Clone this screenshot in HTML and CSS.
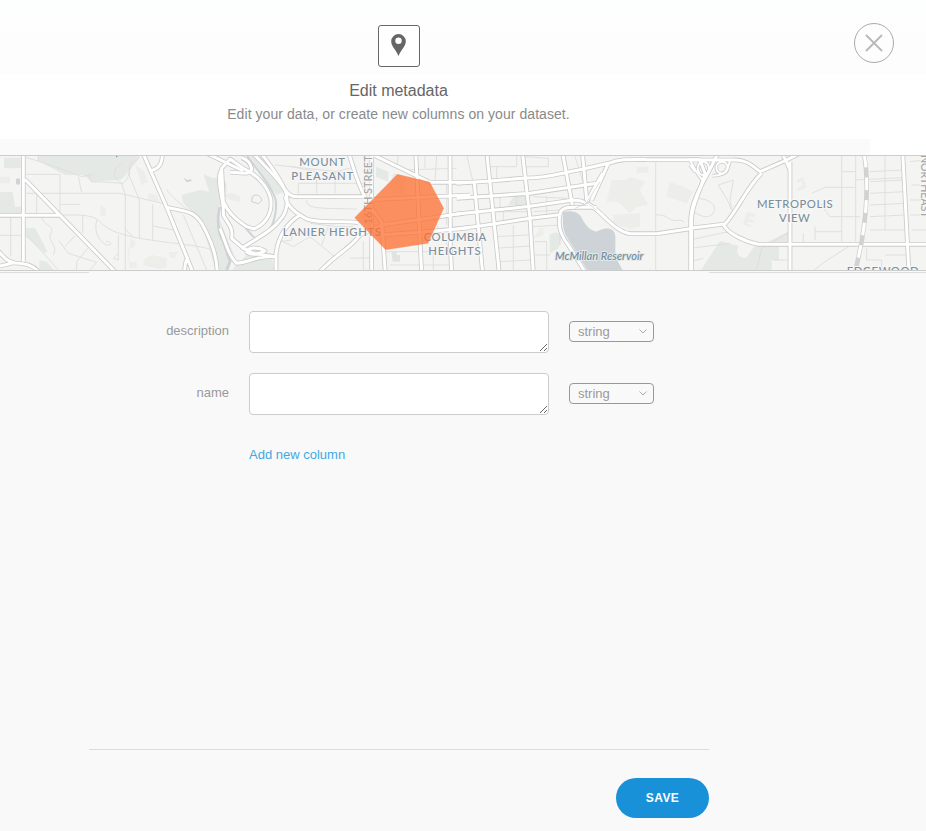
FILE: index.html
```html
<!DOCTYPE html>
<html lang="en">
<head>
<meta charset="utf-8">
<title>Edit metadata</title>
<link rel="stylesheet" href="styles.css">
</head>
<body>
<div class="dialog">
  <header class="header">
    <div class="heading">
      <div class="badge">
        <svg width="15" height="22" viewBox="0 0 15 22"><path fill="#666" fill-rule="evenodd" d="M7.500 0A7.300 7.300 0 0 0 .2 7.300C.2 12.400 4.500 15 7.500 22 10.500 15 14.800 12.400 14.800 7.300A7.300 7.300 0 0 0 7.500 0ZM7.500 3.500A3.200 3.200 0 1 1 7.500 9.900A3.200 3.200 0 0 1 7.500 3.500Z"/></svg>
      </div>
      <h1 class="title">Edit metadata</h1>
      <p class="subtitle">Edit your data, or create new columns on your dataset.</p>
    </div>
    <button class="close" aria-label="Close">
      <svg width="18" height="18" viewBox="0 0 18 18"><path d="M1 1 17 17M17 1 1 17" stroke="#b8b8b8" stroke-width="1.8"/></svg>
    </button>
  </header>

  <svg class="map" viewBox="0 33 2778 342" preserveAspectRatio="none">
    <defs>
      <g id="major">
        <path d="M70 20V350M-10 211H180M75 103 350 385M-10 313C10 334 20 350 45 354C80 356 100 360 120 385M-10 366 45 352"/>
        <path d="M427 20 500 187 580 385M487 20C488 50 482 70 453 77M500 187C555 200 580 195 605 235C635 290 650 330 652 385M565 335C553 350 556 365 553 385M620 25 730 78"/>
        <g transform="translate(690)">
          <path d="M425 20V385M65 20C110 70 145 100 165 135C180 155 190 155 210 155H400M90 20C120 60 145 90 165 135C178 165 170 205 150 225C120 265 70 285 35 310M165 155C175 190 200 205 230 222C280 238 340 225 385 233M210 210C170 235 145 275 138 325V385M355 20C380 100 395 160 455 230L466 385M265 385C310 335 350 315 375 287L395 265M395 268 455 240 700 205M430 30 600 112H720M400 165 720 150M450 270 590 260 720 248M557 20 575 385M660 20 661 300 665 385"/>
          <path d="M-25 70 0 42 40 70C75 85 112 120 122 160C130 210 100 240 72 252L50 245C20 225 -5 205 -20 170ZM-25 75C-45 100 -15 175 -20 210C-5 240 10 245 5 280L40 310L70 325L135 335M-30 250C-10 300 -5 330 20 355C65 350 90 330 135 335M48 320C60 304 90 308 105 318C80 330 60 330 48 320M0 82C20 80 65 95 65 70C60 50 50 43 35 38"/>
        </g>
        <g transform="translate(1380)">
          <path d="M-10 115 90 108 195 99C260 100 300 85 370 72L445 55C480 42 500 43 560 44H720M-10 160 210 145C280 135 320 128 410 115M-10 207 210 184 340 165C380 165 395 185 410 195M-10 252 60 243 210 220 300 209M80 20 100 210 118 385M43 115 68 385M187 20 210 220 220 385M307 20 337 180M367 20 380 165M445 55 395 165M410 195C440 220 470 260 510 266H590L700 250M300 210C292 245 305 275 325 300L378 385M300 210C300 185 330 187 360 187H410"/>
          <path d="M375 180 428 85M720 45 735 85C725 130 695 180 695 220V385"/>
        </g>
        <g transform="translate(2070)">
          <path d="M85 20C55 95 5 150 2 225V385M0 45H130C170 42 190 65 210 80L290 45 330 25M215 85C175 120 140 200 105 237L0 250M100 237C110 265 165 290 205 298H720M300 50V385M275 20 300 75M638 20 657 385"/>
        </g>
      </g>
      <g id="loops"><ellipse cx="2110" cy="70" rx="17" ry="20"/><ellipse cx="2166" cy="68" rx="17" ry="18"/><path d="M2070 45C2082 70 2092 88 2108 106M2190 45C2184 80 2170 92 2138 92M2070 60 2085 80"/></g>
    </defs>
    <rect y="30" width="2778" height="345" fill="#f4f4f3"/>
    <g fill="#e5e9e6">
      <path d="M115 30H415C400 60 380 95 360 105L275 110 250 90H195L115 48ZM12 38H62V70H12ZM0 142 38 140 45 185H65V205H0ZM78 250 105 248 142 318 135 325 78 275ZM118 345 140 350 170 385H118ZM545 150 600 135 628 140 610 88 640 100C670 90 690 115 675 150L650 200 700 325 685 385H650L605 235 550 175ZM745 30 790 30 850 140 830 150ZM700 370 740 330 815 335 825 385H690ZM2100 380 2160 288 2215 303C2205 325 2220 342 2240 337L2262 305 2285 300 2368 258 2370 300 2337 303V345H2315V380ZM1540 155 1575 145 1580 180H1525ZM1648 270C1670 250 1695 270 1675 310L1650 325ZM1128 65 1165 80V110L1128 95ZM1180 85 1220 100 1210 150 1170 130ZM690 145 720 155V170L695 165Z"/>
      <path fill="#edeee9" d="M390 280 408 290 400 310H385V350H410V370H387ZM435 340 455 330 500 340V365L480 372 430 360ZM300 180 318 190 315 215 302 210ZM505 322 535 320 525 338H510ZM405 60 430 75 445 110 425 120ZM445 145 470 150 480 170 445 165ZM0 95 30 95V115H0ZM1835 105H1875L1890 95 1935 110 1920 135 1945 180 1910 185 1890 205 1855 170H1820ZM1910 65H1945V82L1910 85ZM1840 210 1920 204V245L1890 252 1840 235ZM2008 110 2050 125 2080 140 2060 175 2000 155ZM1620 250 1630 248V270L1600 280ZM2240 200 2268 208 2264 218 2248 214 2246 222 2262 226 2260 234 2242 230 2240 236 2256 240 2252 246 2228 240ZM2390 105 2410 96 2420 128 2394 138 2392 130 2408 122 2404 108 2392 113ZM665 148 700 145 720 155V170L690 165Z"/>
    </g>
    <g fill="#cdd3d6">
      <path d="M1688 202C1710 195 1735 199 1745 218C1755 240 1770 256 1790 260C1805 249 1845 240 1846 275L1846 335 1870 380H1765L1700 275C1685 250 1690 225 1688 202Z"/>
      <rect x="48" y="100" width="12" height="19" rx="5"/>
      <path d="M550 98 562 105 574 103V109L560 111Z"/>
      <path d="M658 190C650 225 655 265 670 290L690 350 680 375" fill="none" stroke="#cdd3d6" stroke-width="8"/>
      <path d="M740 30C770 75 815 120 827 165C832 200 820 240 805 260 785 280 770 290 755 270L725 235 690 210 680 185 655 190" fill="none" stroke="#cdd3d6" stroke-width="6"/>
    </g>
    <g class="streets">
      <path d="M78 38C125 50 165 65 245 95L280 87M78 88H180V215M78 145H360L500 178M235 95 245 142M110 145V210M180 178H240M32 211V335M-10 271H65M248 211V265M180 211C280 205 290 220 310 240 365 290 550 290 630 312M290 225C280 265 300 290 320 300C345 302 325 285 318 290M125 215C130 245 170 240 150 270C145 290 175 300 160 330M80 270 135 330 175 375M177 287 205 325 290 352 270 375M225 272 195 305M263 310 230 350V375M355 270V345L340 340 355 325M365 55C330 75 340 110 370 115C395 95 385 60 390 55L420 38M265 90 275 110 330 112 365 115 376 150V385M385 85 418 165V280M458 178V285M458 243 522 255M500 135C530 170 575 205 605 230M550 210 620 375M375 250 400 278M115 30V48M415 30C415 60 380 60 390 90"/>
      <path d="M895 145V115H1090M950 145V80L875 65M1005 145V80L1070 65M825 60 1060 85M920 165C920 190 940 190 1070 192M930 235 1010 245 1060 245M840 285 880 305 930 275 1010 340M875 260V285L840 290M985 245 965 300M1050 340 1120 338V375M1090 290V375M1195 30 1190 65M1205 75 1370 70M1275 30V70M1310 30 1305 110M1290 110 1290 155M1340 105V240M1155 320H1220L1300 320M1170 360H1350M1300 220 1350 315M1300 320V375"/>
      <path class="fill" d="M757 155C770 143 785 155 785 168L775 176 755 170Z"/>
      <path d="M1400 30 1420 115M1460 65H1550V30M1490 65V110M1575 35 1645 40V65H1575M1725 35 1750 115M1500 155V195M1550 155V190M1475 200H1590M1510 200V240M1600 155 1700 160M1600 200 1680 195M1640 155V205M1485 275 1585 270M1485 310 1590 303M1490 350 1595 345M1540 240V385M1600 245 1680 240V300M1605 290H1640V385M1605 330H1650M1967 50V385M1967 210C2010 205 2000 235 2040 225L2052 230"/>
      <path d="M2085 160C2140 160 2155 190 2135 210C2110 225 2100 205 2070 200M2195 195 2182 165 2155 120 2200 105 2190 165ZM2070 285 2185 260M2070 310 2190 295M2070 350 2110 340M2270 375 2285 310 2370 260M2320 345H2370M2435 145 2475 127H2565M2460 175 2490 215H2580M2525 30V290M2567 30V290M2525 80H2567M2445 245V285M2445 260H2525M2410 265V300M2565 105 2710 98M2610 80 2710 75M2610 110 2710 105M2610 145 2715 140M2610 180 2715 175M2610 215 2715 210M2610 255 2720 255M2655 30V255M2730 50 2778 45M2735 120H2778M2730 165H2778M2730 210H2778M2735 255H2778M2430 385 2475 350 2545 305M2600 310V345H2645V375M2655 330H2725"/>
    </g>
    <use href="#major" class="road casing"/><use href="#loops" class="road casing slim"/>
    <use href="#major" class="road"/><use href="#loops" class="road slim"/>
    <path d="M1755 180 1800 110M1750 165 1790 195M1725 190 1770 170" fill="none" stroke="#ccc" stroke-width="2"/>
    <g fill="none"><path d="M2593 30C2606 110 2600 200 2585 290L2565 385" stroke="#d2d2d2" stroke-width="14"/><path d="M2593 30C2606 110 2600 200 2585 290L2565 385" stroke="#fff" stroke-width="9" stroke-dasharray="38 30"/></g>
    <g fill="#dfe3e1"><path d="M348 30H354L350 38Z" fill="#527c62"/><path d="M1174 320H1190V330H1200V350H1178Z"/></g>

    <g class="places">
      <text x="898" y="63" textLength="137">MOUNT</text>
      <text x="874" y="105" textLength="186">PLEASANT</text>
      <text x="848" y="272" textLength="295">LANIER HEIGHTS</text>
      <text x="1271" y="288" textLength="188">COLUMBIA</text>
      <text x="1285" y="330" textLength="157">HEIGHTS</text>
      <text x="2271" y="189" textLength="227">METROPOLIS</text>
      <text x="2337" y="230" textLength="92">VIEW</text>
      <text x="2540" y="389" textLength="216">EDGEWOOD</text>
      <text class="water" x="1665" y="345" textLength="265" lengthAdjust="spacingAndGlyphs">McMillan Reservoir</text>
      <text class="street" transform="translate(1115 238) rotate(-90)" textLength="207" lengthAdjust="spacingAndGlyphs">16TH STREET</text>
      <text class="street" transform="translate(2763 30) rotate(90)" textLength="188" lengthAdjust="spacingAndGlyphs">NORTHEAST</text>
    </g>
    <path d="M1192 88 1289 111 1331 190 1284 295 1157 314 1064 218Z" fill="#ff6d2d" fill-opacity=".75" stroke="#ff7a3d" stroke-opacity=".4" stroke-width="2"/>
  </svg>

  <main class="form">
    <div class="row">
      <label class="label" for="description">description</label>
      <textarea class="field" id="description"></textarea>
      <button class="type">string<svg width="8" height="5" viewBox="0 0 8 5"><path d="M.5.5 4 4 7.500.5" fill="none" stroke="#aaa"/></svg></button>
    </div>
    <div class="row">
      <label class="label" for="name">name</label>
      <textarea class="field" id="name"></textarea>
      <button class="type">string<svg width="8" height="5" viewBox="0 0 8 5"><path d="M.5.5 4 4 7.500.5" fill="none" stroke="#aaa"/></svg></button>
    </div>
    <a class="add">Add new column</a>
  </main>
  <footer class="footer"><button class="save">SAVE</button></footer>
</div>
</body>
</html>
```
FILE: styles.css
```css
* { box-sizing: border-box; }
body { margin: 0; background: #f9f9f9; font-family: "Liberation Sans", Arial, sans-serif; overflow: hidden; }
button { font-family: inherit; padding: 0; margin: 0; }
.dialog { width: 926px; height: 831px; display: flex; flex-direction: column; }
.header {
  height: 155px; flex: none; display: flex; justify-content: space-between; align-items: flex-start; padding-right: 32px;
  background: linear-gradient(#fafafa, #fafafa) 0 139px / 870px 16px no-repeat, linear-gradient(#fdfefe, #fdfdfd) 0 0 / 100% 75px no-repeat, #fff;
}
.heading { width: 797px; padding-top: 25px; display: flex; flex-direction: column; align-items: center; }
.badge { width: 42px; height: 42px; margin-left: 1px; border: 1px solid #666; border-radius: 3px; background: #fff; display: flex; justify-content: center; padding: 8px 1px 0 0; }
.title { margin: 14px 0 0; font-size: 16px; line-height: 20px; font-weight: 400; color: #666; }
.subtitle { margin: 3px 0 0; font-size: 14px; line-height: 20px; color: #8a8a8a; white-space: nowrap; letter-spacing: .06px; }
.close { margin-top: 23px; width: 40px; height: 40px; border: 1px solid #aaa; border-radius: 50%; background: none; display: flex; align-items: center; justify-content: center; }
.map { display: block; width: 926px; height: 116px; flex: none; border-top: 1px solid #ccc; border-bottom: 1px solid #ccc; }
.streets { fill: none; stroke: #dcdcdb; stroke-width: 2.6; }
.streets .fill { stroke: #c8c8c8; }
.road { fill: none; stroke: #fff; stroke-width: 9; stroke-linejoin: round; }
.road.casing { stroke: #cacaca; stroke-width: 14; }
.road.slim { stroke-width: 6; }
.road.casing.slim { stroke-width: 11; }
.places { font-family: Lato, sans-serif; font-size: 34px; fill: #7b8f9d; stroke: #f7f7f6; stroke-width: 6; paint-order: stroke; stroke-linejoin: round; }
.places text { font-weight: 500; }
.places .water { font-style: italic; font-size: 33px; fill: #708d9b; stroke: #e4e9eb; }
.places .street { font-size: 32px; fill: #a5a5a5; }
.form {
  margin-top: 1px; height: 477px; flex: none; padding: 39px 0 0 89px; display: flex; flex-direction: column; gap: 20px; align-items: flex-start;
  background: linear-gradient(#ddd, #ddd) 0 0 / 89px 1px no-repeat, linear-gradient(#ddd, #ddd) 709px 0 / 217px 1px no-repeat;
}
.row { display: flex; height: 42px; align-items: center; gap: 20px; }
.label { width: 140px; text-align: right; font-size: 13px; line-height: 18px; color: #999; padding-bottom: 3px; }
.field { display: block; width: 300px; height: 42px; margin: 0; border: 1px solid #ccc; border-radius: 4px; background: #fff; resize: both; overflow: hidden; outline: 0; }
.type { width: 85px; height: 21px; margin-bottom: 1px; padding: 0 6px 0 8px; border: 1px solid #999; border-radius: 4px; background: none; color: #999; font-size: 13px; line-height: 19px; display: flex; align-items: center; justify-content: space-between; }
.add { margin: 10px 0 0 160px; font-size: 13px; line-height: 20px; color: #3daae3; }
.footer { width: 620px; margin-left: 89px; border-top: 1px solid #ddd; padding-top: 28px; display: flex; justify-content: flex-end; }
.save { width: 93px; height: 40px; border: 0; border-radius: 20px; background: #1991d8; color: #fff; font-size: 12px; font-weight: 700; letter-spacing: .45px; }
```
